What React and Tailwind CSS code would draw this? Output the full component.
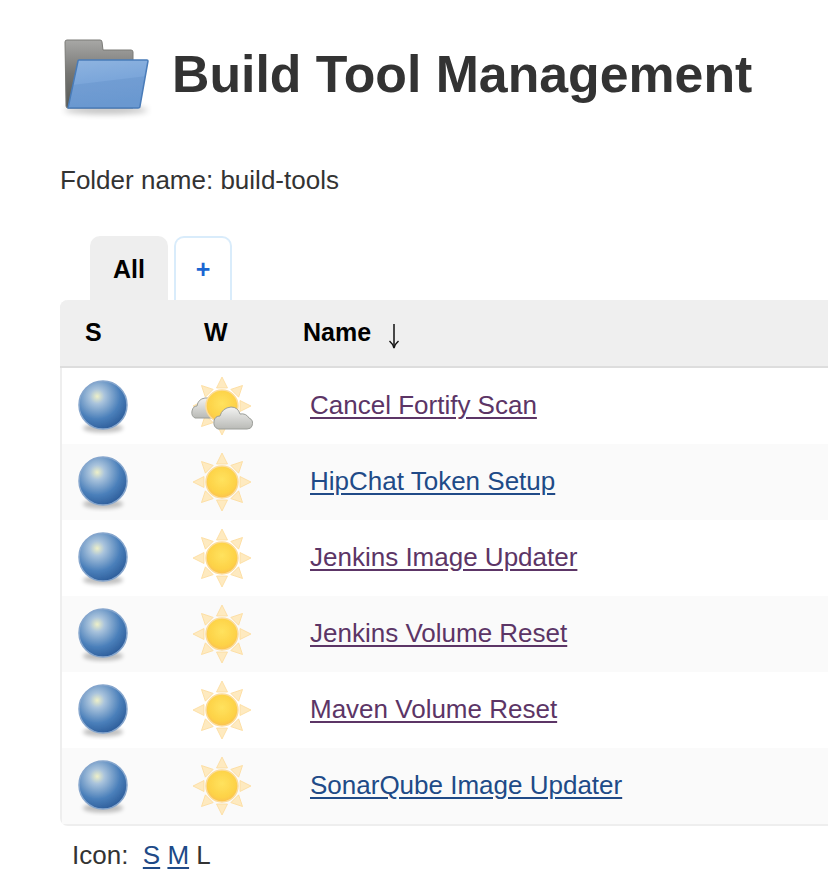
const jobs = [
  { name: 'Cancel Fortify Scan', visited: true, cloudy: true },
  { name: 'HipChat Token Setup', visited: false },
  { name: 'Jenkins Image Updater', visited: true },
  { name: 'Jenkins Volume Reset', visited: true },
  { name: 'Maven Volume Reset', visited: true },
  { name: 'SonarQube Image Updater', visited: false },
]

const FolderIcon = () => (
  <svg width="100" height="90" viewBox="0 0 100 90" className="shrink-0">
    <defs>
      <linearGradient id="folderBack" x1="0" y1="0" x2="0" y2="1">
        <stop offset="0" stopColor="#a8a8a6" />
        <stop offset="0.5" stopColor="#757572" />
        <stop offset="1" stopColor="#565855" />
      </linearGradient>
      <linearGradient id="folderFront" x1="0" y1="0" x2="0.2" y2="1">
        <stop offset="0" stopColor="#8fb4e0" />
        <stop offset="0.5" stopColor="#7ba6da" />
        <stop offset="0.52" stopColor="#719dd3" />
        <stop offset="1" stopColor="#6a98d0" />
      </linearGradient>
      <filter id="folderBlur" x="-20%" y="-100%" width="140%" height="300%">
        <feGaussianBlur stdDeviation="3" />
      </filter>
      <filter id="folderSoft">
        <feGaussianBlur stdDeviation="0.6" />
      </filter>
    </defs>
    <ellipse cx="46" cy="80" rx="42" ry="4" fill="#000" opacity="0.25" filter="url(#folderBlur)" />
    <g filter="url(#folderSoft)">
      <path d="M5 12 Q5 10 7 10 H40 Q42 10 42 12 L43 20 H71 Q73 20 73 22 V78 H8 Q6 78 6 76 Z" fill="url(#folderBack)" stroke="#7a7a76" strokeWidth="1" />
      <path d="M18 31 Q18 30 19 30 H87 Q88 30 88 31 L80 76 Q80 78 78 78 H8 Z" fill="url(#folderFront)" stroke="#4a7cb9" strokeWidth="1.5" strokeLinejoin="round" />
    </g>
  </svg>
)

const BallIcon = ({ id }) => (
  <svg width="60" height="60" viewBox="-30 -30 60 60">
    <defs>
      <radialGradient id={id} cx="0.38" cy="0.32" r="0.7">
        <stop offset="0" stopColor="#eef0c8" />
        <stop offset="0.22" stopColor="#a9c3dc" />
        <stop offset="0.68" stopColor="#4a7fba" />
        <stop offset="1" stopColor="#2f5f9c" />
      </radialGradient>
      <filter id={`${id}b`} x="-30%" y="-100%" width="160%" height="300%">
        <feGaussianBlur stdDeviation="2" />
      </filter>
      <filter id={`${id}s`}>
        <feGaussianBlur stdDeviation="0.4" />
      </filter>
    </defs>
    <ellipse cx="0" cy="22" rx="20" ry="4.5" fill="#000" opacity="0.25" filter={`url(#${id}b)`} />
    <circle cx="0" cy="-1" r="24" fill={`url(#${id})`} stroke="#86a6cd" strokeWidth="1.5" filter={`url(#${id}s)`} />
  </svg>
)

const SunIcon = ({ id, cloudy }) => {
  const rays = [0, 45, 90, 135, 180, 225, 270, 315]
  return (
    <svg width="64" height="64" viewBox="-32 -32 64 64">
      <defs>
        <radialGradient id={id} cx="0.5" cy="0.42" r="0.58">
          <stop offset="0" stopColor="#ffe25e" />
          <stop offset="0.75" stopColor="#fdd247" />
          <stop offset="1" stopColor="#fbc152" />
        </radialGradient>
        <linearGradient id={`${id}c`} x1="0" y1="0" x2="0" y2="1">
          <stop offset="0" stopColor="#f3f3f2" />
          <stop offset="1" stopColor="#b9bab6" />
        </linearGradient>
        <filter id={`${id}s`} x="-10%" y="-10%" width="120%" height="120%">
          <feGaussianBlur stdDeviation="0.5" />
        </filter>
      </defs>
      <g filter={`url(#${id}s)`}>
        {rays.map((r) => (
          <path key={r} d="M-5.5 -18 L0 -29 L5.5 -18 Z" fill="#feeac0" stroke="#fddc9c" strokeWidth="0.8" strokeLinejoin="round" transform={`rotate(${r})`} />
        ))}
        {cloudy && (
          <path d="M-27 12 Q-31 10 -30 5 Q-29 0 -25 0 Q-24 -7 -17 -8 Q-13 -9 -10 -6 L-10 12 Z" fill={`url(#${id}c)`} stroke="#9c9e99" strokeWidth="1" />
        )}
        <circle cx="0" cy="0" r="16" fill={`url(#${id})`} stroke="#fcdc9a" strokeWidth="1.5" />
        {cloudy && (
          <path d="M-4 23 Q-9 21 -8 15 Q-7 10 -2 10 Q0 2 9 1 Q16 1 18 8 Q24 7 27 12 Q32 14 30 20 Q29 23 25 23 Z" fill={`url(#${id}c)`} stroke="#9c9e99" strokeWidth="1" />
        )}
      </g>
    </svg>
  )
}

const SortArrow = () => (
  <svg width="14" height="26" viewBox="0 0 14 26" className="ml-[16px] mt-[5px]" fill="none" stroke="#111" strokeWidth="1.5">
    <path d="M7 1 V24" />
    <path d="M2.5 18 Q6 21 7 25 Q8 21 11.5 18" />
  </svg>
)

export default function App() {
  return (
    <div className="w-[828px] h-[886px] overflow-hidden bg-white text-[#333] font-['Liberation_Sans',Arial,sans-serif]">
      <div className="flex items-center h-[90px] mt-[30px]">
        <div className="ml-[60px] w-[112px] shrink-0">
          <FolderIcon />
        </div>
        <h1 className="text-[51.8px] font-bold leading-none whitespace-nowrap">Build Tool Management</h1>
      </div>

      <p className="ml-[60px] mt-[45px] text-[26px] leading-[30px]">Folder name: build-tools</p>

      <div className="flex ml-[90px] mt-[41px] gap-[6px] h-[64px]">
        <div className="w-[78px] flex items-center justify-center bg-[#eee] rounded-t-[10px] text-black font-bold text-[25px] pt-[3px]">All</div>
        <div className="w-[58px] flex items-center justify-center border-2 border-b-0 border-[#d9ecfb] rounded-t-[10px] text-[#1a66d2] font-bold text-[25px] pt-[2px]">+</div>
      </div>

      <div className="ml-[60px] w-[800px] border-2 border-t-0 border-[#eee] rounded-[8px]">
        <div className="flex items-center h-[68px] -mx-[2px] bg-[#efefef] rounded-t-[8px] border-b-2 border-[#ddd] text-black font-bold text-[25px]">
          <div className="w-[121px] pl-[25px]">S</div>
          <div className="w-[122px] pl-[23px]">W</div>
          <div className="flex items-center">
            <span>Name</span>
            <SortArrow />
          </div>
        </div>
        {jobs.map((job, i) => (
          <div key={job.name} className={`flex items-center h-[76px] ${i % 2 === 1 ? 'bg-[#fafafa]' : 'bg-white'}`}>
            <div className="w-[248px] shrink-0 flex items-center">
              <div className="ml-[11px] w-[60px] shrink-0"><BallIcon id={`ball${i}`} /></div>
              <div className="ml-[57px] w-[64px] shrink-0"><SunIcon id={`sun${i}`} cloudy={job.cloudy} /></div>
            </div>
            <a href="#" className={`text-[26px] leading-[30px] -mt-[2px] underline underline-offset-[3px] ${job.visited ? 'text-[#5c3566]' : 'text-[#204a87]'}`}>{job.name}</a>
          </div>
        ))}
      </div>

      <div className="ml-[72px] mt-[14px] text-[26px] leading-[30px]">
        Icon:&nbsp; <a href="#" className="text-[#204a87] underline underline-offset-[3px]">S</a> <a href="#" className="text-[#204a87] underline underline-offset-[3px]">M</a> L
      </div>
    </div>
  )
}
